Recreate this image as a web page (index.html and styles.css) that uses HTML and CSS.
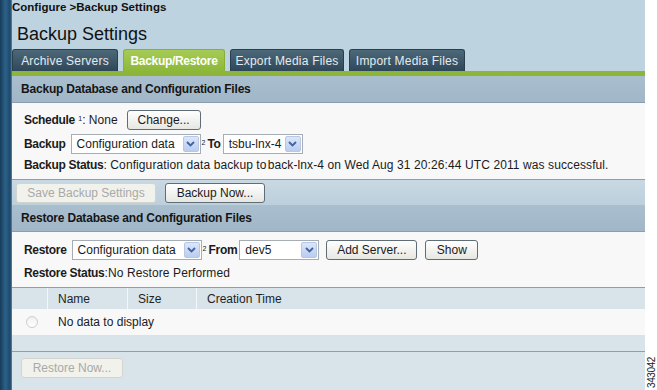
FILE: index.html
```html
<!DOCTYPE html>
<html lang="en">
<head>
  <meta charset="UTF-8">
  <title>Backup Settings</title>
  <link rel="stylesheet" href="styles.css">
</head>
<body>

<div class="page">
  <!-- left navigation edge -->
  <div class="rail"></div>

  <div class="main">
    <div class="crumb">Configure &gt;Backup Settings</div>
    <h1 class="title">Backup Settings</h1>

    <div class="tabs">
      <div class="tab archive">Archive Servers</div>
      <div class="tab active">Backup/Restore</div>
      <div class="tab export">Export Media Files</div>
      <div class="tab import">Import Media Files</div>
    </div>
    <div class="tabbar"></div>

    <!-- Backup -->
    <div class="section-head">Backup Database and Configuration Files</div>
    <div class="section-body backup">
      <div class="row">
        <b>Schedule</b>&nbsp;<sup>1</sup>: None
        <button class="btn change">Change...</button>
      </div>
      <div class="row">
        <b>Backup</b>
        <div class="select wide">
          <span>Configuration data</span>
          <span class="arrow"><svg width="9" height="6" viewBox="0 0 9 6"><path d="M1 1l3.5 3.5L8 1" fill="none" stroke="#3f62a0" stroke-width="1.8"/></svg></span>
        </div>
        <span class="mark"><sup>2</sup><b>To</b></span>
        <div class="select narrow">
          <span>tsbu-lnx-4</span>
          <span class="arrow"><svg width="9" height="6" viewBox="0 0 9 6"><path d="M1 1l3.5 3.5L8 1" fill="none" stroke="#3f62a0" stroke-width="1.8"/></svg></span>
        </div>
      </div>
      <div class="status"><b>Backup Status</b>: Configuration data backup to&#8202;back-lnx-4 on Wed Aug 31 20:26:44 UTC 2011 was successful.</div>
    </div>
    <div class="actions">
      <button class="btn disabled save">Save Backup Settings</button>
      <button class="btn now">Backup Now...</button>
    </div>

    <!-- Restore -->
    <div class="section-head">Restore Database and Configuration Files</div>
    <div class="section-body restore">
      <div class="row">
        <b>Restore</b>
        <div class="select wide">
          <span>Configuration data</span>
          <span class="arrow"><svg width="9" height="6" viewBox="0 0 9 6"><path d="M1 1l3.5 3.5L8 1" fill="none" stroke="#3f62a0" stroke-width="1.8"/></svg></span>
        </div>
        <span class="mark"><sup>2</sup><b>From</b></span>
        <div class="select from">
          <span>dev5</span>
          <span class="arrow"><svg width="9" height="6" viewBox="0 0 9 6"><path d="M1 1l3.5 3.5L8 1" fill="none" stroke="#3f62a0" stroke-width="1.8"/></svg></span>
        </div>
        <button class="btn add">Add Server...</button>
        <button class="btn show">Show</button>
      </div>
      <div class="status"><b>Restore Status</b>:No Restore Performed</div>
    </div>

    <div class="grid">
      <div class="grid-head">
        <div class="cell pick"></div>
        <div class="cell name">Name</div>
        <div class="cell size">Size</div>
        <div class="cell time">Creation Time</div>
      </div>
      <div class="grid-row">
        <div class="cell pick"><span class="radio"></span></div>
        <div class="cell">No data to display</div>
      </div>
      <div class="grid-fill"></div>
    </div>

    <div class="footer">
      <button class="btn disabled restore-now">Restore Now...</button>
    </div>
  </div>

  <div class="margin"><span class="fig">343042</span></div>
</div>

</body>
</html>
```

FILE: styles.css
```css
* {
  box-sizing: border-box;
}
body {
  margin: 0;
  font-family: "Liberation Sans", Arial, sans-serif;
  font-size: 12px;
  color: #1b1b1b;
  background-color: #fff;
}
b {
  letter-spacing: -0.3px;
}
.page {
  display: flex;
  width: 657px;
  height: 390px;
  overflow: hidden;
}
.rail {
  width: 12px;
  background: linear-gradient(to right, #173b5a 0, #2c6188 45%, #1d486b 85%, #5d879f 100%);
}
.main {
  width: 633px;
  display: flex;
  flex-direction: column;
  background-color: #bdd4e0;
}
.margin {
  width: 12px;
  display: flex;
  flex-direction: column;
  justify-content: flex-end;
  align-items: center;
  padding-bottom: 2px;
}
.fig {
  writing-mode: vertical-rl;
  transform: rotate(180deg);
  font-size: 10px;
  letter-spacing: -0.4px;
  color: #222;
}

/* header */
.crumb {
  height: 14px;
  line-height: 14px;
  font-size: 11.5px;
  font-weight: bold;
  color: #111;
}
.title {
  margin: 0;
  height: 35px;
  padding: 5px 0 0 5px;
  line-height: 30px;
  font-size: 18px;
  font-weight: normal;
  color: #111;
}

/* tabs */
.tabs {
  display: flex;
  gap: 5px;
  height: 22px;
}
.tab {
  height: 22px;
  line-height: 22px;
  text-align: center;
  color: #e4eaee;
  letter-spacing: 0.2px;
  border: 1px solid #2a3f4d;
  border-bottom: none;
  border-radius: 3px 3px 0 0;
  background: linear-gradient(#4d6879, #2f4859);
}
.tab.archive {
  width: 106px;
}
.tab.export {
  width: 114px;
}
.tab.import {
  width: 116px;
}
.tab.active {
  width: 102px;
  color: #fff;
  font-weight: bold;
  letter-spacing: -0.3px;
  border-color: #86ae38;
  background: linear-gradient(#a6cb55, #8db83a);
}
.tabbar {
  height: 5px;
  background-color: #8cb53a;
}

/* sections */
.section-head {
  height: 27px;
  line-height: 26px;
  padding-left: 9px;
  font-weight: bold;
  letter-spacing: -0.2px;
  color: #151515;
  background: linear-gradient(#a9bfce, #a1b7c9);
  border-bottom: 1px solid #8b9eac;
}
.section-body {
  display: flex;
  flex-direction: column;
  background-color: #f8f8f8;
  border-bottom: 1px solid #8e9fac;
  padding: 7px 12px 7px 12px;
}
.section-body.backup {
  height: 77px;
  gap: 4px;
}
.section-body.restore {
  height: 56px;
  padding-top: 8px;
  gap: 6px;
}
.row {
  display: flex;
  align-items: center;
  height: 20px;
  white-space: nowrap;
}
.row sup,
.mark sup {
  font-size: 7px;
  position: relative;
  top: -2px;
}
.row > b + .select {
  margin-left: 5px;
}
.status {
  height: 15px;
  line-height: 15px;
  white-space: nowrap;
  letter-spacing: 0.1px;
}
.mark {
  display: flex;
  align-items: center;
  margin: 0 2px 0 1px;
}
.mark sup {
  margin: 0 2px 0 0;
}

/* select boxes */
.select {
  display: flex;
  align-items: center;
  justify-content: space-between;
  height: 20px;
  padding: 0 1px 0 5px;
  background-color: #fff;
  border: 1px solid #a6adb4;
}
.select.wide {
  width: 130px;
}
.select.narrow {
  width: 80px;
}
.select.from {
  width: 80px;
}
.arrow {
  display: flex;
  align-items: center;
  justify-content: center;
  width: 16px;
  height: 16px;
  border: 1px solid #b7c8e6;
  border-radius: 2px;
  background: linear-gradient(#dbe6f8, #bacdf0);
}

/* buttons */
.btn {
  height: 20px;
  padding: 0 9px;
  font-family: inherit;
  font-size: 12px;
  color: #1b1b1b;
  border: 1px solid #5f6d78;
  border-radius: 3px;
  background: linear-gradient(#ffffff, #e6e6e2);
  cursor: pointer;
}
.btn.change {
  width: 74px;
  margin-left: 9px;
}
.btn.disabled {
  color: #a9a9a6;
  border-color: #d4d4ce;
  background: #f2f2ec;
  cursor: default;
}
.btn.add {
  width: 91px;
  margin-left: 7px;
}
.btn.show {
  width: 53px;
  margin-left: 8px;
}
.actions {
  display: flex;
  align-items: center;
  gap: 9px;
  height: 25px;
  padding: 0 4px;
  background: linear-gradient(#c9d9e3, #bccfdc);
}
.btn.save {
  width: 140px;
}
.btn.now {
  width: 100px;
}

/* table */
.grid {
  background-color: #d8e3ea;
}
.grid-head {
  display: flex;
  height: 21px;
  line-height: 22px;
  color: #1f1f1f;
}
.grid-head .cell {
  padding-left: 10px;
  border-right: 1px solid #f4f7f9;
}
.grid-head .pick {
  width: 36px;
}
.grid-head .name {
  width: 80px;
}
.grid-head .size {
  width: 69px;
}
.grid-head .time {
  border-right: none;
}
.grid-row {
  display: flex;
  align-items: center;
  height: 26px;
  background-color: #f8f8f8;
}
.grid-row .pick {
  width: 36px;
  padding-left: 14px;
}
.grid-row .cell + .cell {
  padding-left: 10px;
}
.radio {
  display: block;
  width: 12px;
  height: 12px;
  border: 1px solid #c9cdd0;
  border-radius: 50%;
  background: linear-gradient(#f0f0f0, #fff);
}
.grid-fill {
  height: 17px;
  border-bottom: 1px solid #8e9fac;
}
.footer {
  flex: 1;
  padding: 6px 9px;
  background-color: #d8e3ea;
}
.btn.restore-now {
  width: 102px;
}
```
